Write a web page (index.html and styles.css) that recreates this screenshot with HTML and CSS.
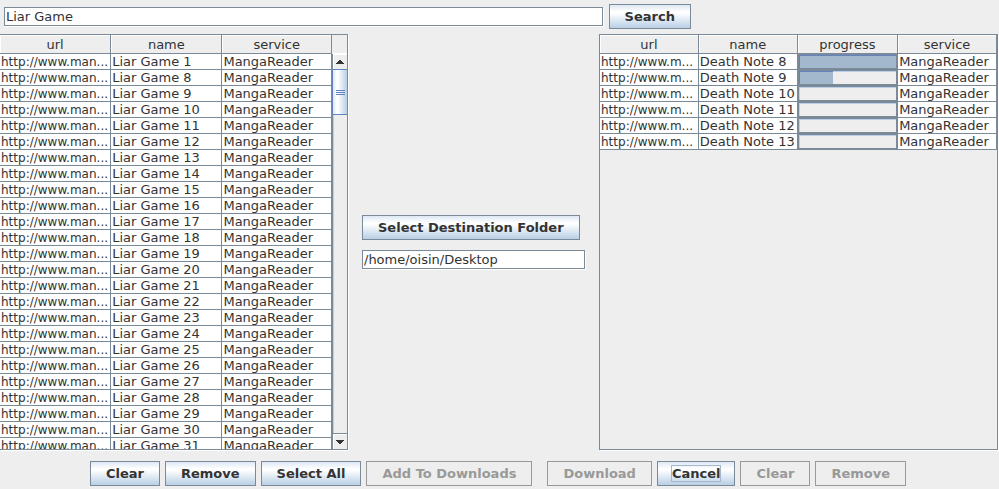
FILE: index.html
```html
<!DOCTYPE html>
<html lang="en">
<head>
<meta charset="utf-8">
<title>Manga Downloader</title>
<link rel="stylesheet" href="styles.css">
</head>
<body>
<form class="search">
  <input class="field" type="text" value="Liar Game" aria-label="Search title">
  <button class="btn" type="button">Search</button>
</form>
<main class="main">
  <section class="pane results">
    <div class="view">
      <table class="grid">
        <thead><tr><th>url</th><th>name</th><th>service</th></tr></thead>
        <tbody>
          <tr><td>http://www.man...</td><td>Liar Game 1</td><td>MangaReader</td></tr>
          <tr><td>http://www.man...</td><td>Liar Game 8</td><td>MangaReader</td></tr>
          <tr><td>http://www.man...</td><td>Liar Game 9</td><td>MangaReader</td></tr>
          <tr><td>http://www.man...</td><td>Liar Game 10</td><td>MangaReader</td></tr>
          <tr><td>http://www.man...</td><td>Liar Game 11</td><td>MangaReader</td></tr>
          <tr><td>http://www.man...</td><td>Liar Game 12</td><td>MangaReader</td></tr>
          <tr><td>http://www.man...</td><td>Liar Game 13</td><td>MangaReader</td></tr>
          <tr><td>http://www.man...</td><td>Liar Game 14</td><td>MangaReader</td></tr>
          <tr><td>http://www.man...</td><td>Liar Game 15</td><td>MangaReader</td></tr>
          <tr><td>http://www.man...</td><td>Liar Game 16</td><td>MangaReader</td></tr>
          <tr><td>http://www.man...</td><td>Liar Game 17</td><td>MangaReader</td></tr>
          <tr><td>http://www.man...</td><td>Liar Game 18</td><td>MangaReader</td></tr>
          <tr><td>http://www.man...</td><td>Liar Game 19</td><td>MangaReader</td></tr>
          <tr><td>http://www.man...</td><td>Liar Game 20</td><td>MangaReader</td></tr>
          <tr><td>http://www.man...</td><td>Liar Game 21</td><td>MangaReader</td></tr>
          <tr><td>http://www.man...</td><td>Liar Game 22</td><td>MangaReader</td></tr>
          <tr><td>http://www.man...</td><td>Liar Game 23</td><td>MangaReader</td></tr>
          <tr><td>http://www.man...</td><td>Liar Game 24</td><td>MangaReader</td></tr>
          <tr><td>http://www.man...</td><td>Liar Game 25</td><td>MangaReader</td></tr>
          <tr><td>http://www.man...</td><td>Liar Game 26</td><td>MangaReader</td></tr>
          <tr><td>http://www.man...</td><td>Liar Game 27</td><td>MangaReader</td></tr>
          <tr><td>http://www.man...</td><td>Liar Game 28</td><td>MangaReader</td></tr>
          <tr><td>http://www.man...</td><td>Liar Game 29</td><td>MangaReader</td></tr>
          <tr><td>http://www.man...</td><td>Liar Game 30</td><td>MangaReader</td></tr>
          <tr><td>http://www.man...</td><td>Liar Game 31</td><td>MangaReader</td></tr>
        </tbody>
      </table>
    </div>
    <div class="scroll">
      <div class="corner"></div>
      <button class="arrow up" type="button" aria-label="Scroll up"><svg viewBox="0 0 8 4"><path d="M3 0h2v1h1v1h1v1h1v1H0V3h1V2h1V1h1z"/></svg></button>
      <div class="track"><div class="thumb"><svg viewBox="0 0 9 5"><path d="M0 0h9v1H0zM0 2h9v1H0zM0 4h9v1H0z"/></svg></div></div>
      <button class="arrow down" type="button" aria-label="Scroll down"><svg viewBox="0 0 8 4"><path d="M0 0h8v1H7v1H6v1H5v1H3V3H2V2H1V1H0z"/></svg></button>
    </div>
  </section>
  <section class="destination">
    <button class="btn" type="button">Select Destination Folder</button>
    <input class="field" type="text" value="/home/oisin/Desktop" aria-label="Destination folder">
  </section>
  <section class="pane queue">
    <div class="view">
      <table class="grid">
        <thead><tr><th>url</th><th>name</th><th>progress</th><th>service</th></tr></thead>
        <tbody>
          <tr><td>http://www.m...</td><td>Death Note 8</td><td class="meter"><progress max="100" value="100" aria-label="Death Note 8"></progress></td><td>MangaReader</td></tr>
          <tr><td>http://www.m...</td><td>Death Note 9</td><td class="meter"><progress max="100" value="35" aria-label="Death Note 9"></progress></td><td>MangaReader</td></tr>
          <tr><td>http://www.m...</td><td>Death Note 10</td><td class="meter"><progress max="100" value="0" aria-label="Death Note 10"></progress></td><td>MangaReader</td></tr>
          <tr><td>http://www.m...</td><td>Death Note 11</td><td class="meter"><progress max="100" value="0" aria-label="Death Note 11"></progress></td><td>MangaReader</td></tr>
          <tr><td>http://www.m...</td><td>Death Note 12</td><td class="meter"><progress max="100" value="0" aria-label="Death Note 12"></progress></td><td>MangaReader</td></tr>
          <tr><td>http://www.m...</td><td>Death Note 13</td><td class="meter"><progress max="100" value="0" aria-label="Death Note 13"></progress></td><td>MangaReader</td></tr>
        </tbody>
      </table>
    </div>
  </section>
</main>
<footer class="actions">
  <div class="group">
    <button class="btn" type="button">Clear</button>
    <button class="btn" type="button">Remove</button>
    <button class="btn" type="button">Select All</button>
    <button class="btn" type="button" disabled>Add To Downloads</button>
  </div>
  <div class="group">
    <button class="btn" type="button" disabled>Download</button>
    <button class="btn" type="button"><span class="focused">Cancel</span></button>
    <button class="btn" type="button" disabled>Clear</button>
    <button class="btn" type="button" disabled>Remove</button>
  </div>
</footer>
</body>
</html>
```
FILE: styles.css
```css
:root {
  --line: #7a8a99;
  --face: #eeeeee;
  --ink: #333333;
  --accent: #6382bf;
  --fill: #a3b8cc;
}

* { box-sizing: border-box; }

body {
  margin: 0;
  height: 100vh;
  display: flex;
  flex-direction: column;
  overflow: hidden;
  background: var(--face);
  color: var(--ink);
  font: 13px/15px "DejaVu Sans", sans-serif;
}

button, input { font: inherit; color: inherit; }

.search {
  display: flex;
  align-items: baseline;
  gap: 6px;
  height: 34px;
  padding: 4px 4px 0;
}

.search .field { width: 60.4%; }

.field {
  height: 19px;
  padding: 0 1px;
  border: 1px solid var(--line);
  border-radius: 0;
  background: #ffffff;
  box-shadow: 1px 1px 0 #ffffff;
  outline: none;
}

.btn {
  height: 25px;
  padding: 0 15px;
  border: 1px solid var(--line);
  border-radius: 0;
  background: linear-gradient(#dde8f3 0%, #ffffff 30%, #ffffff 35%, #b8cfe5 100%);
  font-weight: bold;
  white-space: nowrap;
}

.btn:disabled {
  border-color: #999999;
  background: var(--face);
  color: #999999;
}

.focused {
  display: inline-block;
  margin: 0 -1px;
  outline: 1px solid var(--fill);
}

.main {
  flex: 1;
  min-height: 0;
  display: grid;
  grid-template-columns: 348fr 251fr 399fr;
  grid-template-rows: minmax(0, 1fr);
  padding-right: 1px;
}

.pane {
  display: flex;
  min-width: 0;
  border: 1px solid var(--line);
  border-left: 0;
  box-shadow: 1px 1px 0 #ffffff;
}

.queue { border-left: 1px solid var(--line); }

.view {
  flex: 1;
  min-width: 0;
  overflow: hidden;
}

.grid {
  width: 100%;
  table-layout: fixed;
  border-collapse: separate;
  border-spacing: 0;
}

.grid th, .grid td {
  height: 16px;
  padding: 0 1px;
  border: solid var(--line);
  border-width: 0 1px 1px 0;
  background: #ffffff;
  overflow: hidden;
  white-space: nowrap;
}

.grid th {
  height: 19px;
  background: var(--face);
  box-shadow: inset 1px 1px 0 #ffffff;
  font-weight: normal;
}

.grid td:first-child {
  padding-top: 1px;
  font-size: 12px;
  line-height: 14px;
}

.results th:nth-child(-n+2) { width: 33.5%; }

.queue th { width: 24.9%; }

.queue th:nth-child(3) { width: 25.3%; }

.grid .meter { padding: 0; }

progress {
  appearance: none;
  display: block;
  width: 100%;
  height: 15px;
  border: 1px solid var(--line);
  background: var(--face);
  box-shadow: inset 1px 1px 0 #b8cfe5;
}

progress::-webkit-progress-bar { background: transparent; }

progress::-webkit-progress-value {
  background: var(--fill);
  box-shadow: inset 1px 1px 0 var(--accent);
}

.scroll {
  flex: none;
  width: 15px;
  display: flex;
  flex-direction: column;
}

.corner {
  height: 19px;
  border-bottom: 1px solid #ffffff;
}

.arrow {
  display: grid;
  place-items: center;
  height: 16px;
  padding: 0;
  border: solid var(--line);
  border-width: 0 0 0 1px;
  border-radius: 0;
  background: var(--face);
  box-shadow: inset 1px 1px 0 #ffffff;
}

.arrow svg { width: 8px; height: 4px; fill: var(--ink); }

.up { height: 15px; }

.down { border-top-width: 1px; }

.track {
  flex: 1;
  border-left: 1px solid var(--line);
  box-shadow: inset 1px 0 0 #b8cfe5;
}

.thumb {
  display: grid;
  place-items: center;
  height: 46px;
  margin-left: -1px;
  border: 1px solid var(--accent);
  border-right: 0;
  background: linear-gradient(90deg, #dde8f3 0%, #ffffff 30%, #ffffff 35%, #b8cfe5 100%);
}

.thumb svg { width: 9px; height: 5px; fill: var(--accent); }

.destination {
  display: flex;
  flex-direction: column;
  align-items: flex-start;
  justify-content: center;
  gap: 10px;
  padding: 0 14px;
}

.destination .field { width: 100%; }

.actions {
  display: flex;
  justify-content: center;
  gap: 15px;
  padding: 11px 3px 3px 0;
}

.group { display: flex; gap: 5px; }
```
